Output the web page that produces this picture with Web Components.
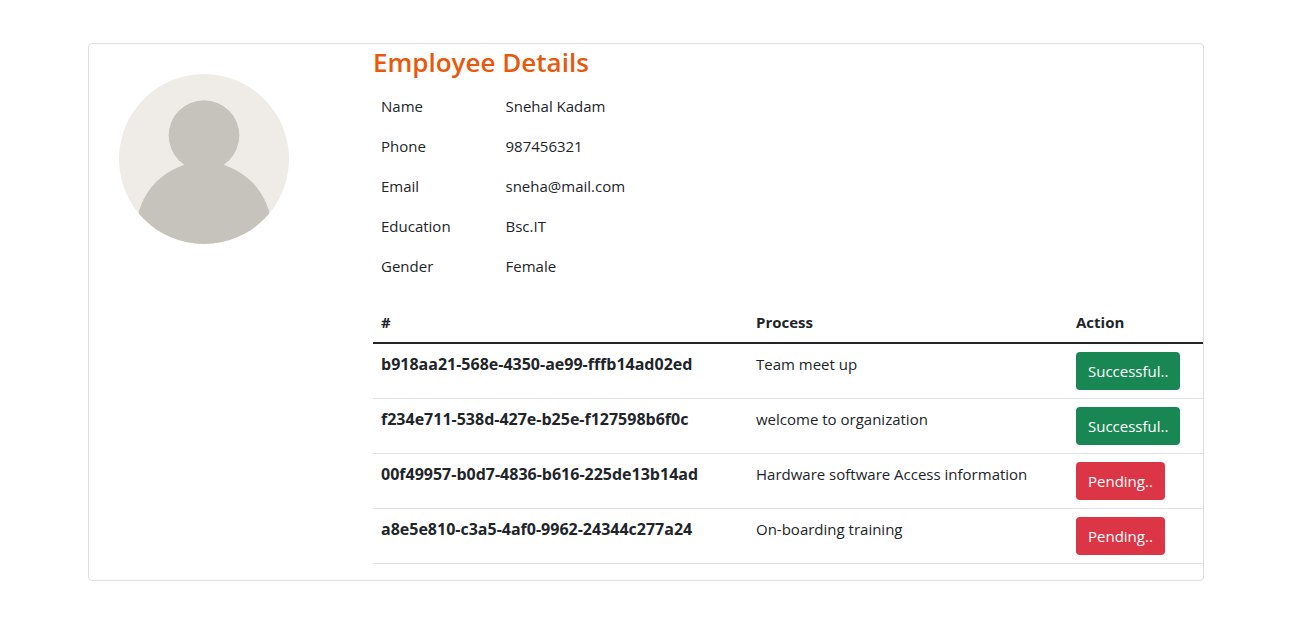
<!DOCTYPE html>
<html lang="en">
<head>
<meta charset="utf-8">
<meta name="viewport" content="width=device-width, initial-scale=1">
<title>Employee Details</title>
<style>
  body {
    margin: 0;
    background: #fff;
    color: #212529;
    font-family: "Segoe UI", "Open Sans", "Noto Sans", sans-serif;
    font-size: 15px;
    line-height: 24px;
  }
</style>
</head>
<body>
<employee-page>
  <employee-card>
    <user-avatar slot="media"></user-avatar>
    <span slot="title">Employee Details</span>
    <detail-list></detail-list>
    <process-table></process-table>
  </employee-card>
</employee-page>

<script>
  class BaseElement extends HTMLElement {
    connectedCallback() {
      if (this.shadowRoot) return;
      this.attachShadow({ mode: "open" }).innerHTML = this.render();
    }
  }

  class EmployeePage extends BaseElement {
    render() {
      return `
        <style>
          :host { display: block; padding: 43px 93px 43px 88px; }
          main { max-width: 1140px; margin: 0 auto; }
        </style>
        <main><slot></slot></main>`;
    }
  }

  class EmployeeCard extends BaseElement {
    render() {
      return `
        <style>
          :host {
            display: grid;
            grid-template-columns: 284px minmax(0, 1fr);
            border: 1px solid #dfdfdf;
            border-radius: 4px;
            background: #fff;
          }
          .media { padding: 30px; }
          h3 {
            margin: 0 0 6px;
            color: #e8590c;
            font-size: 26px;
            font-weight: 600;
            line-height: 36px;
          }
        </style>
        <div class="media"><slot name="media"></slot></div>
        <section>
          <h3><slot name="title"></slot></h3>
          <slot></slot>
        </section>`;
    }
  }

  class UserAvatar extends BaseElement {
    render() {
      return `
        <style>
          :host { display: block; width: 170px; height: 170px; }
          svg { display: block; width: 100%; height: 100%; }
        </style>
        <svg viewBox="0 0 170 170" role="img" aria-label="Profile picture">
          <clipPath id="round"><circle cx="85" cy="85" r="85"/></clipPath>
          <g clip-path="url(#round)">
            <rect width="170" height="170" fill="#efebe6"/>
            <g fill="#c6c3bc">
              <circle cx="85" cy="61.5" r="35.3"/>
              <circle cx="85" cy="155.5" r="67.5"/>
            </g>
          </g>
        </svg>`;
    }
  }

  class DetailList extends BaseElement {
    render() {
      const details = [
        ["Name", "Snehal Kadam"],
        ["Phone", "987456321"],
        ["Email", "sneha@mail.com"],
        ["Education", "Bsc.IT"],
        ["Gender", "Female"]
      ];
      return `
        <style>
          :host { display: block; margin-bottom: 16px; }
          table { width: 100%; border-spacing: 0; table-layout: fixed; }
          th, td { padding: 8px; text-align: left; font-weight: 400; }
          th { width: 15%; box-sizing: border-box; }
        </style>
        <table>
          <tbody>${details.map(([label, value]) =>
            `<tr><th scope="row">${label}</th><td>${value}</td></tr>`).join("")}</tbody>
        </table>`;
    }
  }

  class ProcessTable extends BaseElement {
    render() {
      const rows = [
        ["b918aa21-568e-4350-ae99-fffb14ad02ed", "Team meet up", "success", "Successful.."],
        ["f234e711-538d-427e-b25e-f127598b6f0c", "welcome to organization", "success", "Successful.."],
        ["00f49957-b0d7-4836-b616-225de13b14ad", "Hardware software Access information", "danger", "Pending.."],
        ["a8e5e810-c3a5-4af0-9962-24344c277a24", "On-boarding training", "danger", "Pending.."]
      ];
      return `
        <style>
          :host { display: block; margin-bottom: 16px; }
          table { width: 100%; border-spacing: 0; table-layout: fixed; }
          .id { width: 375px; }
          .action { width: 135px; }
          th, td {
            padding: 8px;
            border-bottom: 1px solid #dee2e6;
            text-align: left;
            vertical-align: top;
          }
          thead th { border-bottom: 2px solid #212529; }
          tbody th { font-size: 16px; }
        </style>
        <table>
          <colgroup><col class="id"><col><col class="action"></colgroup>
          <thead>
            <tr><th scope="col">#</th><th scope="col">Process</th><th scope="col">Action</th></tr>
          </thead>
          <tbody>${rows.map(([id, name, kind, label]) => `
            <tr>
              <th scope="row">${id}</th>
              <td>${name}</td>
              <td><status-button kind="${kind}">${label}</status-button></td>
            </tr>`).join("")}</tbody>
        </table>`;
    }
  }

  class StatusButton extends BaseElement {
    render() {
      return `
        <style>
          :host { display: flex; --fill: #198754; }
          :host([kind="danger"]) { --fill: #dc3545; }
          button {
            padding: 7px 12px;
            border: 0;
            border-radius: 4px;
            background: var(--fill);
            color: #fff;
            font: inherit;
            cursor: pointer;
          }
        </style>
        <button type="button"><slot></slot></button>`;
    }
  }

  customElements.define("employee-page", EmployeePage);
  customElements.define("employee-card", EmployeeCard);
  customElements.define("user-avatar", UserAvatar);
  customElements.define("detail-list", DetailList);
  customElements.define("process-table", ProcessTable);
  customElements.define("status-button", StatusButton);
</script>
</body>
</html>
